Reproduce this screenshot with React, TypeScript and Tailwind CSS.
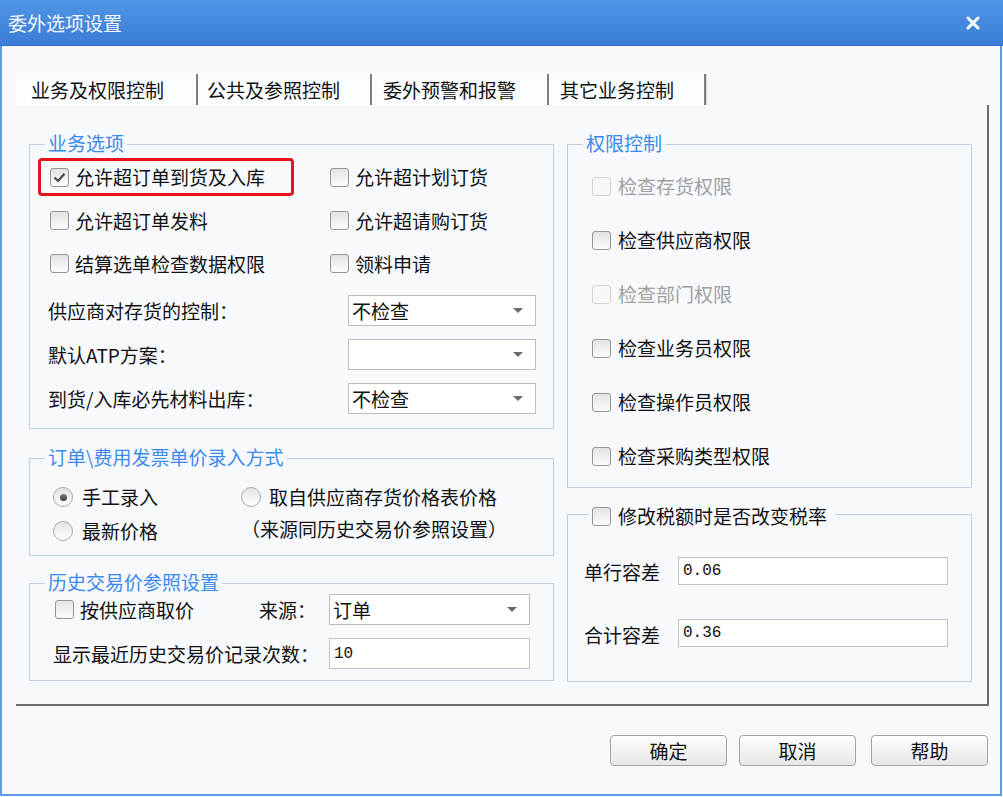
import React from "react";

function Check({ checked = false, disabled = false }: { checked?: boolean; disabled?: boolean }) {
  return (
    <span
      className={`flex h-[19px] w-[19px] shrink-0 items-center justify-center rounded-[3px] border ${
        disabled
          ? "border-[#d4d4d4] bg-[#f7f7f7]"
          : "border-[#969696] bg-linear-to-b from-[#e3e3e3] to-[#fcfcfc]"
      }`}
    >
      {checked && (
        <svg width="13" height="11" viewBox="0 0 13 11">
          <path d="M1.5 5.5 L5 9 L11.5 1.8" fill="none" stroke="#4a4a4a" strokeWidth="2.2" />
        </svg>
      )}
    </span>
  );
}

function Radio({ checked = false }: { checked?: boolean }) {
  return (
    <span className="flex h-[20px] w-[20px] shrink-0 items-center justify-center rounded-full border border-[#a9a9a9] bg-linear-to-b from-[#e4e4e4] to-[#ffffff]">
      {checked && <span className="h-[7px] w-[7px] rounded-full bg-linear-to-b from-[#7a7a7a] to-[#3d3d3d]" />}
    </span>
  );
}

function Combo({ value, w }: { value: string; w: string }) {
  return (
    <div className={`flex h-[31px] ${w} items-center justify-between border border-[#bdbdbd] bg-white pl-[3px] pr-[12px]`}>
      <span>{value}</span>
      <svg width="10" height="5" viewBox="0 0 10 5">
        <path d="M0 0H10L5 5Z" fill="#6b6b6b" />
      </svg>
    </div>
  );
}

function NumInput({ value, w, h }: { value: string; w: string; h: string }) {
  return (
    <div className={`flex ${h} ${w} items-center border border-[#c2c2c2] bg-white pl-[4px] font-['Liberation_Mono',monospace] text-[16px]`}>
      {value}
    </div>
  );
}

function Legend({ children }: { children: React.ReactNode }) {
  return (
    <div className="-mt-[14px] ml-[15px] w-fit bg-[#f8f9fd] px-[3px] leading-[24px] text-[#3a8aee]">{children}</div>
  );
}

function Item({
  children,
  checked = false,
  disabled = false,
}: {
  children: React.ReactNode;
  checked?: boolean;
  disabled?: boolean;
}) {
  return (
    <div className="flex items-center border-[3px] border-transparent pl-[9px]">
      <Check checked={checked} disabled={disabled} />
      <span className={`ml-[6px] ${disabled ? "text-[#a0a0a0]" : ""}`}>{children}</span>
    </div>
  );
}

function Btn({ children }: { children: React.ReactNode }) {
  return (
    <div className="flex h-[31px] w-[117px] items-center justify-center rounded-[4px] border border-[#a3a3a3] bg-linear-to-b from-[#fefefe] to-[#e7e7e7]">
      {children}
    </div>
  );
}

export default function App() {
  return (
    <div className="h-[797px] w-[1003px] bg-white font-['Noto_Sans_CJK_SC','Noto_Sans',sans-serif] text-[19px] leading-[24px] text-[#111111]">
      {/* Title bar */}
      <div className="flex h-[46px] items-center justify-between border-b border-[#2f6fc6] bg-linear-to-b from-[#4f95e5] to-[#3b7dd7] pl-[8px] pr-[23px] text-[#f4f8fd]">
        <span>委外选项设置</span>
        <svg width="14" height="14" viewBox="0 0 14 14">
          <path d="M2 2L12 12M12 2L2 12" stroke="#ffffff" strokeWidth="3" strokeLinecap="round" />
        </svg>
      </div>

      {/* Body */}
      <div className="flex h-[750px] w-[1002px] flex-col border-x-2 border-b-2 border-[#5d9de8] bg-[#f8f9fd] pl-[14px]">
        {/* Tabs */}
        <div className="mt-[28px] flex h-[31px]">
          <div className="flex h-[31px] w-[182px] items-center border-r-2 border-[#7e7e7e] bg-[#fcfdff] pl-[15px] shadow-[1px_0_0_#d6d6d6]">
            业务及权限控制
          </div>
          <div className="flex h-[31px] w-[174px] items-center border-r-2 border-[#7e7e7e] bg-[#fcfdff] pl-[9px] shadow-[1px_0_0_#d6d6d6]">
            公共及参照控制
          </div>
          <div className="flex h-[31px] w-[177px] items-center border-r-2 border-[#7e7e7e] bg-[#fcfdff] pl-[11px] shadow-[1px_0_0_#d6d6d6]">
            委外预警和报警
          </div>
          <div className="flex h-[31px] w-[157px] items-center border-r-2 border-[#7e7e7e] bg-[#fcfdff] pl-[11px] shadow-[1px_0_0_#d6d6d6]">
            其它业务控制
          </div>
        </div>

        {/* Pane */}
        <div className="flex h-[601px] w-[973px] gap-[13px] border-r-2 border-b-2 border-[#6e6e6e] pl-[13px] pt-[39px]">
          {/* Left column */}
          <div className="flex w-[525px] flex-col">
            {/* 业务选项 */}
            <div className="h-[285px] border border-[#bfd0e6]">
              <Legend>业务选项</Legend>
              <div className="grid grid-cols-[280px_1fr] grid-rows-[44px_43px_43px] items-center pl-[8px]">
                <div className="flex h-[38px] w-[256px] items-center rounded-[4px] border-[3px] border-[#e8141c] pl-[9px]">
                  <Check checked />
                  <span className="ml-[6px]">允许超订单到货及入库</span>
                </div>
                <Item>允许超计划订货</Item>
                <Item>允许超订单发料</Item>
                <Item>允许超请购订货</Item>
                <Item>结算选单检查数据权限</Item>
                <Item>领料申请</Item>
              </div>
              <div className="mt-[10px] flex flex-col gap-[13px]">
                <div className="grid grid-cols-[318px_188px] items-center">
                  <span className="pl-[18px]">供应商对存货的控制：</span>
                  <Combo value="不检查" w="w-[188px]" />
                </div>
                <div className="grid grid-cols-[318px_188px] items-center">
                  <span className="pl-[18px]">默认ATP方案：</span>
                  <Combo value="" w="w-[188px]" />
                </div>
                <div className="grid grid-cols-[318px_188px] items-center">
                  <span className="pl-[18px]">到货/入库必先材料出库：</span>
                  <Combo value="不检查" w="w-[188px]" />
                </div>
              </div>
            </div>

            {/* 订单\费用发票单价录入方式 */}
            <div className="mt-[29px] h-[98px] border border-[#bfd0e6]">
              <Legend>订单\费用发票单价录入方式</Legend>
              <div className="mt-[11px] grid auto-rows-[34px] grid-cols-[211px_1fr] items-center">
                <div className="flex items-center pl-[23px]">
                  <Radio checked />
                  <span className="ml-[9px]">手工录入</span>
                </div>
                <div className="flex items-center">
                  <Radio />
                  <span className="ml-[8px]">取自供应商存货价格表价格</span>
                </div>
                <div className="flex items-center pl-[23px]">
                  <Radio />
                  <span className="ml-[9px]">最新价格</span>
                </div>
                <div className="-mt-[5px]">（来源同历史交易价参照设置）</div>
              </div>
            </div>

            {/* 历史交易价参照设置 */}
            <div className="mt-[27px] h-[98px] border border-[#bfd0e6]">
              <Legend>历史交易价参照设置</Legend>
              <div className="grid grid-cols-[299px_201px] items-center gap-y-[13px]">
                <div className="flex items-center pl-[25px] pr-[13px]">
                  <Check />
                  <span className="ml-[6px]">按供应商取价</span>
                  <span className="ml-auto">来源：</span>
                </div>
                <Combo value="订单" w="w-[201px]" />
                <span className="pl-[23px]">显示最近历史交易价记录次数：</span>
                <NumInput value="10" w="w-[201px]" h="h-[31px]" />
              </div>
            </div>
          </div>

          {/* Right column */}
          <div className="flex w-[405px] flex-col">
            <div className="h-[344px] border border-[#bfd0e6]">
              <Legend>权限控制</Legend>
              <div className="grid auto-rows-[54px] items-center pl-[24px] pt-[4px]">
                {[
                  ["检查存货权限", true],
                  ["检查供应商权限", false],
                  ["检查部门权限", true],
                  ["检查业务员权限", false],
                  ["检查操作员权限", false],
                  ["检查采购类型权限", false],
                ].map(([t, d]) => (
                  <div key={t as string} className="flex items-center">
                    <Check disabled={d as boolean} />
                    <span className={`ml-[7px] ${d ? "text-[#a0a0a0]" : ""}`}>{t as string}</span>
                  </div>
                ))}
              </div>
            </div>

            <div className="mt-[26px] h-[168px] border border-[#bfd0e6]">
              <div className="-mt-[11px] ml-[21px] flex w-fit items-center bg-[#f8f9fd] pl-[3px] pr-[8px] leading-[24px]">
                <Check />
                <span className="ml-[7px]">修改税额时是否改变税率</span>
              </div>
              <div className="mt-[29px] flex flex-col gap-[34px]">
                <div className="flex items-center">
                  <span className="w-[110px] pl-[16px] pt-[2px]">单行容差</span>
                  <NumInput value="0.06" w="w-[270px]" h="h-[28px]" />
                </div>
                <div className="flex items-center">
                  <span className="w-[110px] pl-[16px] pt-[4px]">合计容差</span>
                  <NumInput value="0.36" w="w-[270px]" h="h-[28px]" />
                </div>
              </div>
            </div>
          </div>
        </div>

        {/* Buttons */}
        <div className="mt-[29px] flex justify-end pr-[12px]">
          <Btn>确定</Btn>
          <div className="ml-[12px]">
            <Btn>取消</Btn>
          </div>
          <div className="ml-[15px]">
            <Btn>帮助</Btn>
          </div>
        </div>
      </div>
    </div>
  );
}
